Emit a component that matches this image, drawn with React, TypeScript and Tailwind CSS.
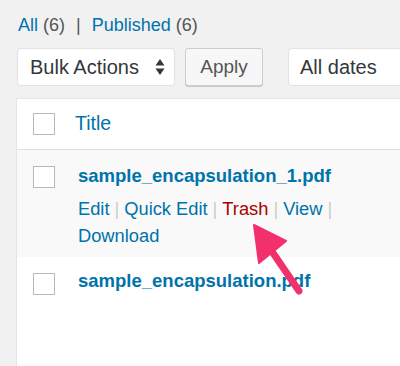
import React from 'react';

const Arrow = () => (
  <svg className="absolute left-[240px] top-[215px] pointer-events-none" width="80" height="90" viewBox="0 0 80 90">
    <path d="M59 76 L31 35" stroke="#f2306b" strokeWidth="7" strokeLinecap="round" fill="none" />
    <path d="M14 10 L46 26 L19 48 Z" fill="#f2306b" stroke="#f2306b" strokeWidth="2" strokeLinejoin="round" />
  </svg>
);

const Checkbox = () => <div className="w-[22px] h-[22px] border border-[#b4b9be] bg-white shrink-0" />;

const Sep = () => <span className="text-[#ccc] mx-[5px]">|</span>;

const App = () => {
  return (
    <div className="relative w-[400px] h-[366px] overflow-hidden bg-[#f1f1f1] font-['Liberation_Sans',Arial,sans-serif]">
      <div className="pt-[14px] pl-[18px] text-[18px] leading-[22px] text-[#555]">
        <span className="text-[#0073aa]">All</span> (6) <span className="mx-[6px] text-[#555]">|</span>{' '}
        <span className="text-[#0073aa]">Published</span> (6)
      </div>

      <div className="flex items-center mt-[12px] pl-[17px] gap-[10px]">
        <div className="shrink-0 w-[158px] h-[38px] bg-white border border-[#e2e2e2] rounded-[4px] flex items-center justify-between pl-[12px] pr-[9px] text-[20px] text-[#32373c]">
          <span>Bulk Actions</span>
          <svg width="10" height="18" viewBox="0 0 10 18">
            <path d="M5 1 L9.5 7.5 H0.5 Z" fill="#32373c" />
            <path d="M5 17 L9.5 10.5 H0.5 Z" fill="#32373c" />
          </svg>
        </div>
        <div className="shrink-0 w-[78px] h-[38px] bg-[#f7f7f7] border border-[#ccc] rounded-[3px] flex items-center justify-center text-[19px] text-[#555] shadow-[0_1px_0_#ccc]">
          Apply
        </div>
        <div className="shrink-0 ml-[15px] w-[130px] h-[38px] bg-white border border-[#e2e2e2] rounded-[4px] flex items-center pl-[11px] text-[20px] text-[#32373c]">
          All dates
        </div>
      </div>

      <div className="mt-[12px] ml-[16px] bg-white border-l border-t border-[#e5e5e5] h-[300px]">
        <div className="h-[51px] flex items-center pl-[16px] border-b border-[#e1e1e1]">
          <Checkbox />
          <span className="ml-[20px] text-[19.5px] text-[#0073aa]">Title</span>
        </div>
        <div className="bg-[#f9f9f9] h-[107px] pl-[16px] pt-[16px] flex">
          <Checkbox />
          <div className="ml-[23px] -mt-[3px]">
            <div className="text-[18.5px] font-bold text-[#0073aa] leading-[26px]">sample_encapsulation_1.pdf</div>
            <div className="mt-[6px] text-[18.3px] leading-[27px] text-[#0073aa] w-[290px]">
              Edit<Sep />Quick Edit<Sep /><span className="text-[#a00]">Trash</span><Sep />View<Sep />
              <br />
              Download
            </div>
          </div>
        </div>
        <div className="h-[110px] pl-[16px] pt-[16px] flex">
          <Checkbox />
          <div className="ml-[23px] -mt-[5px] text-[18.5px] font-bold text-[#0073aa] leading-[26px]">sample_encapsulation.pdf</div>
        </div>
      </div>

      <Arrow />
    </div>
  );
};

export default App;
